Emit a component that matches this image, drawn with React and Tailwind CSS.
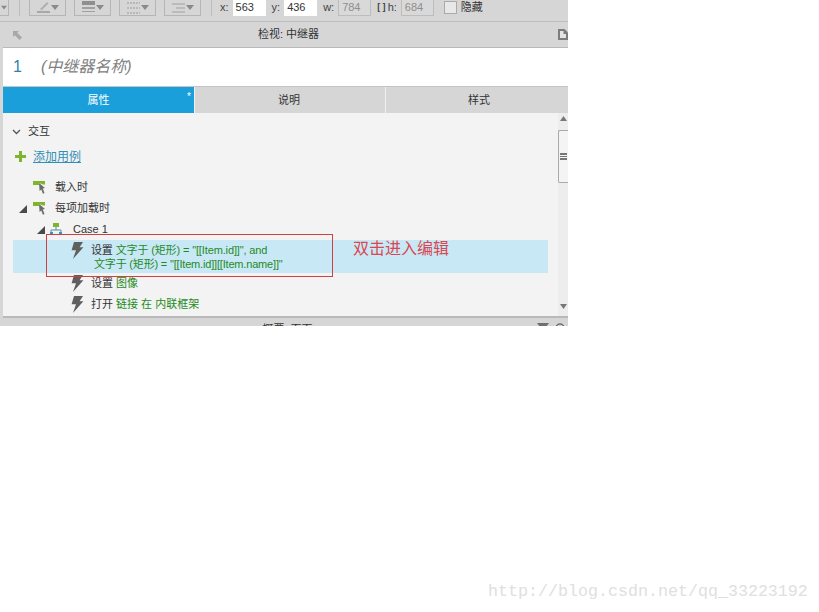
const font = '"Liberation Sans","Noto Sans CJK SC",sans-serif';

function Field({ label, value, disabled, w = "w-[33px]" }) {
  return (
    <div className="flex items-center gap-[4px]">
      <span className="text-[11px] text-[#444]">{label}</span>
      <div className={`${w} h-[17px] flex items-center pl-[3px] text-[11px] ${disabled ? "bg-[#d9d9d9] border border-[#bdbdbd] text-[#8f8f8f]" : "bg-white text-[#333]"}`}>{value}</div>
    </div>
  );
}

function ToolBtn({ w, children }) {
  return (
    <div className={`${w} h-[16px] border border-t-0 border-[#b5b5b5] flex items-center justify-between pl-[7px] pr-[6px]`}>
      {children}
      <svg width="8" height="5" viewBox="0 0 8 5"><path d="M0 0h8L4 5z" fill="#8a8a8a" /></svg>
    </div>
  );
}

function Cursor({ color = "#7fb52b" }) {
  return (
    <svg width="13" height="14" viewBox="0 0 13 14" className="shrink-0">
      <path d="M0 0h12v3.5H10L6 2v2H0z" fill={color} />
      <path d="M6 2l6 5-2.2.6L11.5 12l-1.6.7-1.6-4.3L6.6 10z" fill="#6b6b6b" />
    </svg>
  );
}

function Bolt() {
  return (
    <svg width="13" height="17" viewBox="0 0 13 17" className="shrink-0">
      <path d="M3 0h9L8.6 5.2H12.4L2 17 5 8.2H0.6z" fill="#5f5f5f" />
    </svg>
  );
}

function Tri() {
  return (
    <svg width="8" height="8" viewBox="0 0 8 8" className="shrink-0"><path d="M8 0v8H0z" fill="#4a4a4a" /></svg>
  );
}

function Scrollbar() {
  return (
    <div className="absolute right-0 top-0 bottom-0 w-[10px] bg-[#ededed] flex flex-col items-center">
      <svg width="7" height="5" viewBox="0 0 7 5" className="mt-[3px]"><path d="M3.5 0L7 5H0z" fill="#777" /></svg>
      <div className="w-[10px] h-[53px] mt-[9px] bg-[#f4f4f4] border border-r-0 border-[#a9a9a9] rounded-l-[2px] flex flex-col items-center justify-center gap-[1px]">
        <div className="w-[7px] h-[2px] bg-[#777]" />
        <div className="w-[7px] h-[1px] bg-[#777]" />
        <div className="w-[7px] h-[2px] bg-[#777]" />
      </div>
      <div className="flex-1" />
      <svg width="7" height="5" viewBox="0 0 7 5" className="mb-[7px]"><path d="M0 0h7L3.5 5z" fill="#777" /></svg>
    </div>
  );
}

export default function App() {
  return (
    <div className="relative w-[819px] h-[612px] bg-white overflow-hidden" style={{ fontFamily: font }}>
      <div className="w-[568px] h-[326px] bg-[#d6d6d6] flex flex-col overflow-hidden">
        {/* toolbar */}
        <div className="h-[22px] shrink-0 border-b border-[#bdbdbd] flex items-start text-[#444]">
          <div className="w-[9px] h-[16px] border border-t-0 border-l-0 border-[#b5b5b5] flex items-center justify-center">
            <svg width="6" height="5" viewBox="0 0 8 5"><path d="M0 0h8L4 5z" fill="#8a8a8a" /></svg>
          </div>
          <div className="w-px h-[16px] bg-[#bcbcbc] ml-[10px] mr-[9px]" />
          <div className="flex gap-[8px]">
            <ToolBtn w="w-[37px]">
              <svg width="14" height="13" viewBox="0 0 14 13"><path d="M3 8L10 1l1.5 1.5L4.5 9.5z" fill="#b0b0b0" /><rect x="0" y="10" width="13" height="2" fill="#a8a8a8" /></svg>
            </ToolBtn>
            <ToolBtn w="w-[37px]">
              <svg width="13" height="13" viewBox="0 0 13 13"><rect y="0" width="13" height="4" fill="#8f8f8f" /><rect y="6" width="13" height="2" fill="#a0a0a0" /><rect y="10" width="13" height="1" fill="#a0a0a0" /></svg>
            </ToolBtn>
            <ToolBtn w="w-[37px]">
              <svg width="13" height="12" viewBox="0 0 13 12"><path d="M0 1h13M0 6h13M0 11h13" stroke="#9a9a9a" strokeWidth="1" strokeDasharray="2 1" /></svg>
            </ToolBtn>
            <ToolBtn w="w-[37px]">
              <svg width="13" height="12" viewBox="0 0 13 12"><path d="M0 2h13M0 10h13M4 6h9" stroke="#a0a0a0" strokeWidth="1" /></svg>
            </ToolBtn>
          </div>
          <div className="w-px h-[16px] bg-[#bcbcbc] ml-[10px] mr-[8px]" />
          <div className="flex items-center gap-[6px] h-[15px]">
            <Field label="x:" value="563" />
            <Field label="y:" value="436" />
            <Field label="w:" value="784" disabled />
            <div className="flex items-center gap-[1px]">
              <span className="text-[9px] font-bold text-[#444] mr-[1px]">[ ]</span>
              <Field label="h:" value="684" disabled />
            </div>
            <div className="flex items-center gap-[5px] ml-[4px]">
              <div className="w-[13px] h-[13px] border border-[#aaa] bg-[#e8e8e8]" />
              <span className="text-[11px] text-[#333] -ml-[1px]">隐藏</span>
            </div>
          </div>
        </div>

        {/* header */}
        <div className="h-[26px] shrink-0 ml-[3px] pl-[6px] border-b border-[#b9b9b9] relative flex items-center justify-center text-[11px] text-[#333]">
          <svg width="9" height="9" viewBox="0 0 9 9" className="absolute left-[10px] top-[9px]"><path d="M0 0h6L4.2 1.8 9 6.6 6.6 9 1.8 4.2 0 6z" fill="#a8a8a8" /></svg>
          检视: 中继器
          <svg width="10" height="11" viewBox="0 0 10 11" className="absolute right-0 top-[7px]"><path d="M0 0h6.5L10 3.5V11H0z" fill="#7c7c7c" /><path d="M2 2h3.5v3H8v4H2z" fill="#e4e4e4" /></svg>
        </div>

        {/* name */}
        <div className="h-[38px] shrink-0 ml-[3px] bg-white flex items-center">
          <span className="text-[16px] text-[#2f7fb0] ml-[10px] w-[28px]">1</span>
          <span className="text-[16px] italic text-[#808080]">(中继器名称)</span>
        </div>

        {/* tabs */}
        <div className="h-[27px] shrink-0 ml-[3px] flex border-t border-[#c4c4c4] text-[11px] text-[#333]">
          <div className="w-[191px] relative flex items-center justify-center bg-[#1a9fdb] text-white">
            属性
            <span className="absolute right-[3px] top-[2px] text-[10px]">*</span>
          </div>
          <div className="w-[191px] pr-[2px] flex items-center justify-center border-l border-[#f0f0f0] bg-[#d6d6d6]">说明</div>
          <div className="flex-1 pl-[4px] flex items-center justify-center border-l border-[#f0f0f0] bg-[#d6d6d6]">样式</div>
        </div>

        {/* content */}
        <div className="relative h-[203px] shrink-0 ml-[3px] bg-[#f3f3f4] text-[11px] text-[#333]">
          <Scrollbar />
          <div className="flex flex-col">
            <div className="h-[19px] mt-[9px] flex items-center pl-[9px] gap-[7px]">
              <svg width="9" height="6" viewBox="0 0 9 6"><path d="M1 1l3.5 3.5L8 1" fill="none" stroke="#555" strokeWidth="1.3" /></svg>
              <span>交互</span>
            </div>
            <div className="h-[19px] mt-[6px] flex items-center pl-[12px] gap-[7px]">
              <svg width="11" height="11" viewBox="0 0 11 11"><path d="M4 0h3v4h4v3H7v4H4V7H0V4h4z" fill="#7fb52b" /></svg>
              <span className="text-[12px] text-[#2f8fb5] underline">添加用例</span>
            </div>
            <div className="h-[21px] mt-[11px] flex items-center pl-[30px] gap-[9px]">
              <Cursor />
              <span>载入时</span>
            </div>
            <div className="h-[21px] flex items-center pl-[16px] gap-[6px]">
              <Tri />
              <Cursor />
              <span className="ml-[3px]">每项加载时</span>
            </div>
            <div className="h-[21px] flex items-center pl-[34px] gap-[5px]">
              <Tri />
              <svg width="12" height="13" viewBox="0 0 12 13" className="shrink-0">
                <rect x="3" y="0" width="6" height="4" fill="#7fb52b" />
                <path d="M6 4v3M1 9V7h10v2" stroke="#4a8fb5" fill="none" />
                <rect x="0" y="9" width="3" height="3" fill="#4a8fb5" />
                <rect x="9" y="9" width="3" height="3" fill="#4a8fb5" />
              </svg>
              <span className="ml-[6px]">Case 1</span>
            </div>
            <div className="h-[33px] ml-[10px] w-[535px] bg-[#c9e8f6] flex items-start pl-[58px] gap-[7px]">
              <div className="mt-[2px]"><Bolt /></div>
              <div className="flex flex-col leading-[14px] pt-[3px] tracking-[-0.13px]">
                <span>设置 <span className="text-[#1e8a1e]">文字于 (矩形) = "[[Item.id]]", and</span></span>
                <span className="text-[#1e8a1e] pl-[3px] tracking-[-0.18px]">文字于 (矩形) = "[[Item.id]][[Item.name]]"</span>
              </div>
            </div>
            <div className="h-[21px] flex items-center pl-[68px] gap-[7px]">
              <Bolt />
              <span>设置 <span className="text-[#1e8a1e]">图像</span></span>
            </div>
            <div className="h-[21px] flex items-center pl-[68px] gap-[7px]">
              <Bolt />
              <span>打开 <span className="text-[#1e8a1e]">链接 在 内联框架</span></span>
            </div>
          </div>
        </div>

        {/* bottom */}
        <div className="flex-1 ml-[3px] pl-[4px] border-t-2 border-[#b9b9b9] relative flex items-start justify-center">
          <span className="text-[11px] text-[#333] mt-[3px]">概要: 页面</span>
          <div className="absolute right-[3px] top-[5px] flex items-start gap-[6px]">
            <svg width="12" height="8" viewBox="0 0 12 8"><path d="M0 0h12L6 8z" fill="#6f6f6f" /></svg>
            <svg width="10" height="8" viewBox="0 0 10 8"><circle cx="5" cy="5" r="4" fill="none" stroke="#6f6f6f" strokeWidth="1.5" /></svg>
          </div>
        </div>
      </div>

      {/* annotation */}
      <div className="absolute left-[46px] top-[234px] w-[287px] h-[43px] border border-[#d04040]" />
      <div className="absolute left-[353px] top-[237px] text-[16px] leading-[24px] text-[#d9474f]">双击进入编辑</div>
      <div className="absolute left-[488px] top-[581px] text-[16.67px] leading-[22px] text-[#e0e0e0]" style={{ fontFamily: '"Liberation Mono",monospace' }}>http://blog.csdn.net/qq_33223192</div>
    </div>
  );
}
